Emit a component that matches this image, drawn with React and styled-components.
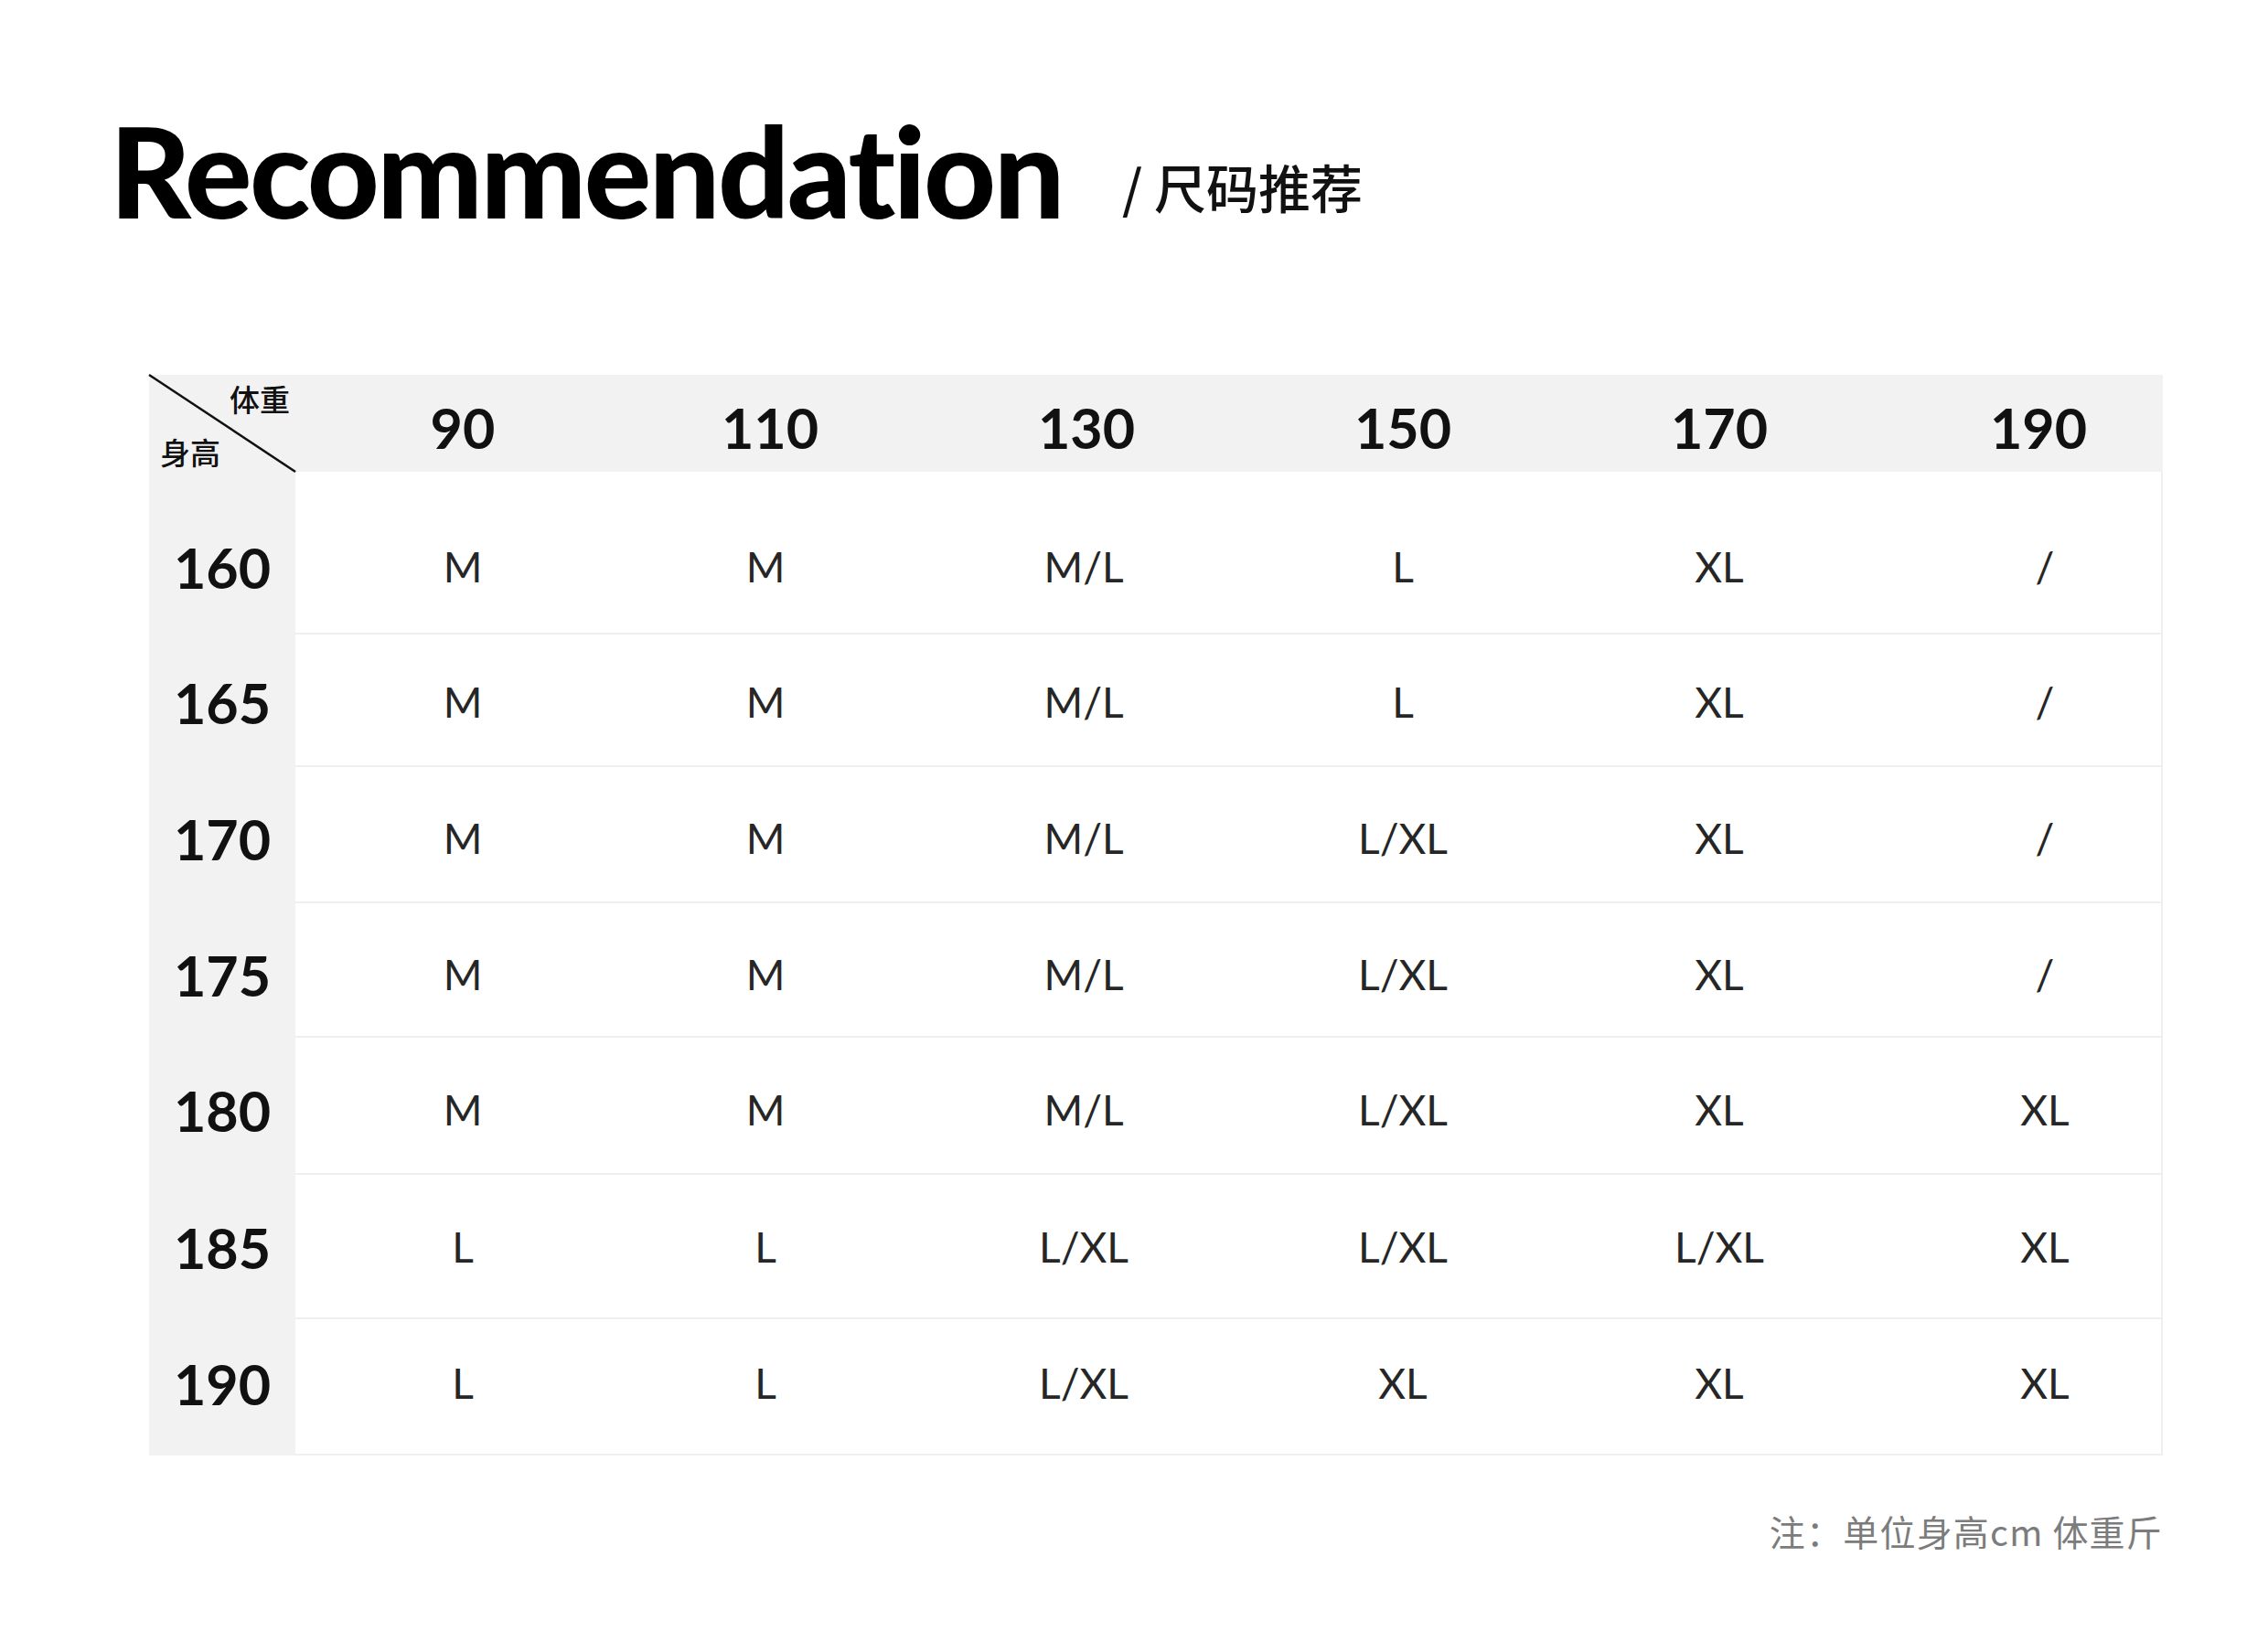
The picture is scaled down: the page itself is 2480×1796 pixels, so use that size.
import React from "react";
import styled, { createGlobalStyle } from "styled-components";

const Global = createGlobalStyle`
  html, body { margin: 0; padding: 0; background: #ffffff; }
  body { font-family: "Lato", "Noto Sans CJK SC", sans-serif; }
`;

const Page = styled.div`
  width: 2480px;
  height: 1796px;
  box-sizing: border-box;
  padding: 118px 0 0 0;
  background: #ffffff;
`;

const TitleBar = styled.div`
  display: flex;
  align-items: flex-start;
  padding-left: 120px;
  gap: 65px;
  height: 137px;
`;

const Title = styled.h1`
  margin: 0;
  font-family: "Lato", sans-serif;
  font-weight: 900;
  font-size: 137px;
  line-height: 1;
  letter-spacing: -2.4px;
  color: #000;
`;

const Subtitle = styled.span`
  margin-top: 57px;
  font-family: "Noto Sans CJK SC", sans-serif;
  font-weight: 500;
  font-size: 57px;
  line-height: 1;
  color: #111;
`;

const Table = styled.div`
  margin: 155px 0 0 163px;
  width: 2202px;
`;

const COLS = "160px repeat(5, 346px) 312px";

const HeaderRow = styled.div`
  display: grid;
  grid-template-columns: ${COLS};
  height: 106px;
  background: #f2f2f2;
`;

const Corner = styled.div`
  position: relative;
  display: flex;
  flex-direction: column;
  justify-content: space-between;
  box-sizing: border-box;
  padding: 8px 6px 4px 12px;
  font-family: "Noto Sans CJK SC", sans-serif;
  font-weight: 500;
  font-size: 33px;
  line-height: 1.1;
  color: #111;
`;

const CornerTop = styled.span`
  align-self: flex-end;
`;

const CornerBottom = styled.span`
  align-self: flex-start;
`;

const Diagonal = styled.svg`
  position: absolute;
  left: 0;
  top: 0;
  width: 160px;
  height: 106px;
  overflow: visible;
`;

const HeadCell = styled.div`
  display: flex;
  align-items: center;
  justify-content: center;
  padding-left: ${(p) => p.$shift || 0}px;
  padding-top: 8px;
  font-family: "Lato", sans-serif;
  font-weight: 700;
  font-size: 61px;
  color: #111;
`;

const Row = styled.div`
  display: grid;
  grid-template-columns: ${COLS};
  height: ${(p) => p.$h}px;
`;

const Label = styled.div`
  display: flex;
  align-items: center;
  justify-content: center;
  background: #f2f2f2;
  padding-top: ${(p) => (p.$pad > 0 ? p.$pad : 0)}px;
  padding-bottom: ${(p) => (p.$pad < 0 ? -p.$pad : 0)}px;
  font-family: "Lato", sans-serif;
  font-weight: 700;
  font-size: 61px;
  color: #111;
`;

const Cell = styled.div`
  display: flex;
  align-items: center;
  justify-content: center;
  box-sizing: border-box;
  padding-left: ${(p) => (p.$shift > 0 ? p.$shift : 0)}px;
  padding-right: ${(p) => (p.$shift < 0 ? -p.$shift : 0)}px;
  padding-top: ${(p) => (p.$pad > 0 ? p.$pad : 0)}px;
  padding-bottom: ${(p) => (p.$pad < 0 ? -p.$pad : 0)}px;
  border-bottom: 2px solid #efefef;
  border-right: ${(p) => (p.$last ? "2px solid #efefef" : "none")};
  font-family: "Lato", sans-serif;
  font-weight: 400;
  font-size: 46px;
  color: #262626;
`;

const Note = styled.div`
  width: 2365px;
  margin-top: 63px;
  text-align: right;
  font-family: "Noto Sans CJK SC", sans-serif;
  font-size: 39px;
  line-height: 1;
  letter-spacing: 1.2px;
  color: #7c7c7c;
`;

const weights = [90, 110, 130, 150, 170, 190];
const headShifts = [20, 0, 0, 0, 0, 40];
const cellShifts = [20, -10, -6, 0, 0, 56];
const rowHeights = [178, 145, 149, 147, 150, 158, 149];
const rowPads = [31, 4, 8, 10, 9, 0, -8];

const rows = [
  [160, ["M", "M", "M/L", "L", "XL", "/"]],
  [165, ["M", "M", "M/L", "L", "XL", "/"]],
  [170, ["M", "M", "M/L", "L/XL", "XL", "/"]],
  [175, ["M", "M", "M/L", "L/XL", "XL", "/"]],
  [180, ["M", "M", "M/L", "L/XL", "XL", "XL"]],
  [185, ["L", "L", "L/XL", "L/XL", "L/XL", "XL"]],
  [190, ["L", "L", "L/XL", "XL", "XL", "XL"]],
];

export default function App() {
  return (
    <Page>
      <Global />
      <TitleBar>
        <Title>Recommendation</Title>
        <Subtitle>/ 尺码推荐</Subtitle>
      </TitleBar>
      <Table>
        <HeaderRow>
          <Corner>
            <Diagonal viewBox="0 0 160 106">
              <line x1="0" y1="0" x2="160" y2="106" stroke="#111" strokeWidth="2.5" />
            </Diagonal>
            <CornerTop>体重</CornerTop>
            <CornerBottom>身高</CornerBottom>
          </Corner>
          {weights.map((w, i) => (
            <HeadCell key={w} $shift={headShifts[i]}>
              {w}
            </HeadCell>
          ))}
        </HeaderRow>
        {rows.map(([h, sizes], r) => (
          <Row key={h} $h={rowHeights[r]}>
            <Label $pad={rowPads[r]}>{h}</Label>
            {sizes.map((s, i) => (
              <Cell key={i} $shift={cellShifts[i]} $pad={rowPads[r]} $last={i === 5}>
                {s}
              </Cell>
            ))}
          </Row>
        ))}
      </Table>
      <Note>注：单位身高cm 体重斤</Note>
    </Page>
  );
}
